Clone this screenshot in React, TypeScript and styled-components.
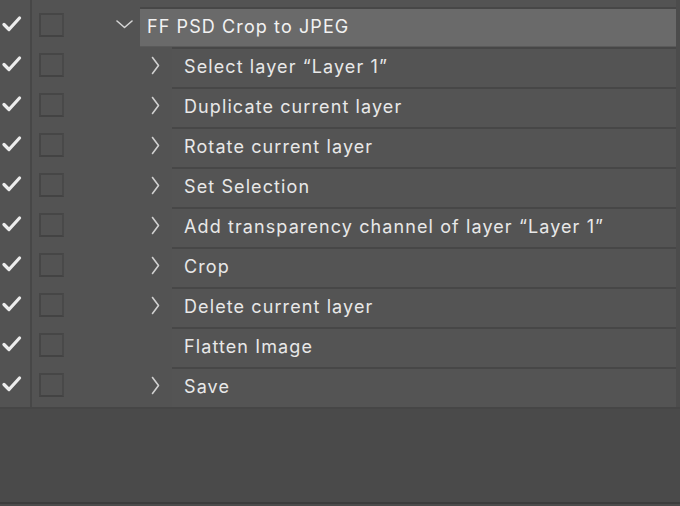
import styled, { createGlobalStyle } from "styled-components";

const GlobalStyle = createGlobalStyle`
  html, body {
    margin: 0;
    padding: 0;
    background: #4b4b4b;
  }
  body {
    font-family: Inter, "Liberation Sans", Arial, sans-serif;
    -webkit-font-smoothing: antialiased;
  }
`;

const Panel = styled.div`
  width: 680px;
  height: 506px;
  display: flex;
  flex-direction: column;
  background: #4b4b4b;
  overflow: hidden;
`;

const ListSection = styled.div`
  display: flex;
  background: #535353;
  border-bottom: 2px solid #464646;
`;

const ListColumn = styled.div`
  flex: 1;
  display: flex;
  flex-direction: column;
`;

const ScrollTrack = styled.div`
  width: 4px;
  background: #4c4c4c;
`;

const Row = styled.div<{ $height: number }>`
  display: flex;
  height: ${(p) => p.$height}px;
`;

const CheckCell = styled.div`
  width: 32px;
  border-right: 2px solid #474747;
  display: flex;
  align-items: center;
  justify-content: flex-start;
  padding: 0 0 6px 1px;
  box-sizing: border-box;
  flex-shrink: 0;
`;

const BoxCell = styled.div`
  width: 40px;
  flex-shrink: 0;
  display: flex;
  align-items: center;
  padding: 0 0 4px 7px;
  box-sizing: border-box;
`;

const DialogBox = styled.div`
  width: 25px;
  height: 24px;
  box-sizing: border-box;
  border: 2px solid #464646;
  border-right-color: #494949;
  border-bottom-color: #434343;
`;

const ToggleCell = styled.div<{ $level: number }>`
  width: ${(p) => (p.$level === 0 ? 68 : 100)}px;
  flex-shrink: 0;
  display: flex;
  align-items: center;
  box-sizing: border-box;
  padding-left: ${(p) => (p.$level === 0 ? 44 : 79)}px;
  padding-bottom: ${(p) => (p.$level === 0 ? 6 : 4)}px;
`;

const StepBody = styled.div<{ $level: number; $selected?: boolean }>`
  flex: 1;
  display: flex;
  align-items: center;
  box-sizing: border-box;
  border-top: 2px solid #474747;
  background: ${(p) => (p.$selected ? "#6a6a6a" : "#545454")};
  box-shadow: ${(p) => (p.$selected ? "inset 0 -1px 0 #5a5a5a" : "none")};
  padding: 0 0 4px ${(p) => (p.$level === 0 ? 7 : 12)}px;
  color: ${(p) => (p.$selected ? "#f2f2f2" : "#e8e8e8")};
  font-size: 18px;
  letter-spacing: 1.1px;
  white-space: nowrap;
`;

const Footer = styled.div`
  height: 93px;
  background: #4a4a4a;
  border-bottom: 2px solid #3c3c3c;
`;

const CheckIcon = () => (
  <svg width="21" height="18" viewBox="0 0 21 18">
    <polyline
      points="3,9.5 8,14.5 18.5,3"
      fill="none"
      stroke="#ececec"
      strokeWidth="3.3"
      strokeLinecap="round"
      strokeLinejoin="round"
    />
  </svg>
);

const ChevronDown = () => (
  <svg width="17" height="9" viewBox="0 0 17 9">
    <polyline
      points="1,1 8.5,7.5 16,1"
      fill="none"
      stroke="#d4d4d4"
      strokeWidth="1.6"
      strokeLinecap="round"
      strokeLinejoin="round"
    />
  </svg>
);

const ChevronRight = () => (
  <svg width="9" height="19" viewBox="0 0 9 19">
    <polyline
      points="1.5,1.5 7.5,9.5 1.5,17.5"
      fill="none"
      stroke="#d0d0d0"
      strokeWidth="1.6"
      strokeLinecap="round"
      strokeLinejoin="round"
    />
  </svg>
);

type Step = { label: string; expandable: boolean };

const steps: Step[] = [
  { label: "Select layer \u201cLayer 1\u201d", expandable: true },
  { label: "Duplicate current layer", expandable: true },
  { label: "Rotate current layer", expandable: true },
  { label: "Set Selection", expandable: true },
  { label: "Add transparency channel of layer \u201cLayer 1\u201d", expandable: true },
  { label: "Crop", expandable: true },
  { label: "Delete current layer", expandable: true },
  { label: "Flatten Image", expandable: false },
  { label: "Save", expandable: true },
];

const ActionRow = ({
  label,
  level,
  open,
  expandable,
  selected,
}: {
  label: string;
  level: number;
  open?: boolean;
  expandable: boolean;
  selected?: boolean;
}) => (
  <Row $height={40}>
    <CheckCell>
      <CheckIcon />
    </CheckCell>
    <BoxCell>
      <DialogBox />
    </BoxCell>
    <ToggleCell $level={level}>
      {expandable && (open ? <ChevronDown /> : <ChevronRight />)}
    </ToggleCell>
    <StepBody $level={level} $selected={selected}>
      {label}
    </StepBody>
  </Row>
);

export default function App() {
  return (
    <>
      <GlobalStyle />
      <Panel>
        <ListSection>
          <ListColumn>
            <Row $height={7}>
              <CheckCell />
            </Row>
            <ActionRow label="FF PSD Crop to JPEG" level={0} open expandable selected />
            {steps.map((s) => (
              <ActionRow key={s.label} label={s.label} level={1} expandable={s.expandable} />
            ))}
          </ListColumn>
          <ScrollTrack />
        </ListSection>
        <Footer />
      </Panel>
    </>
  );
}
